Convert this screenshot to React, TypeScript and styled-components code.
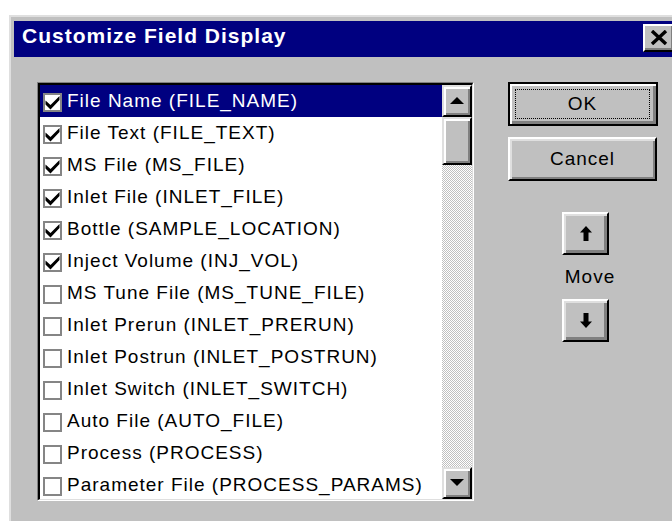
import React from 'react';
import styled, { createGlobalStyle } from 'styled-components';

const GlobalStyle = createGlobalStyle`
  html, body {
    margin: 0;
    padding: 0;
    background: #ffffff;
  }
  body {
    width: 672px;
    height: 521px;
    overflow: hidden;
    font-family: "Liberation Sans", Arial, sans-serif;
  }
`;

const Page = styled.div`
  width: 672px;
  height: 521px;
  overflow: hidden;
  box-sizing: border-box;
  padding: 15px 0 0 9px;
`;

const Window = styled.div`
  width: 680px;
  height: 520px;
  box-sizing: border-box;
  background: #c0c0c0;
  border-top: 2px solid #dfdfdf;
  border-left: 2px solid #dfdfdf;
  padding: 4px 0 0 3px;
  display: flex;
  flex-direction: column;
`;

const TitleBar = styled.div`
  width: 664px;
  height: 36px;
  flex: none;
  box-sizing: border-box;
  background: #000080;
  display: flex;
  align-items: flex-start;
  justify-content: space-between;
  padding: 0 3px 0 8px;
`;

const TitleText = styled.span`
  color: #ffffff;
  font-weight: bold;
  font-size: 21px;
  letter-spacing: 1px;
  line-height: 36px;
  margin-top: -3px;
`;

const CloseButton = styled.div`
  width: 32px;
  height: 28px;
  margin-top: 3px;
  box-sizing: border-box;
  background: #c0c0c0;
  border: 2px solid;
  border-color: #ffffff #000000 #000000 #ffffff;
  box-shadow: inset -2px -2px #808080;
  display: flex;
  align-items: center;
  justify-content: center;
  padding: 0 0 2px 0;
`;

const Body = styled.div`
  display: flex;
  align-items: flex-start;
  padding: 25px 0 0 23px;
`;

const ListFrame = styled.div`
  width: 437px;
  height: 419px;
  flex: none;
  box-sizing: border-box;
  border: 1px solid;
  border-color: #808080 #ffffff #ffffff #808080;
  display: flex;
`;

const ListInner = styled.div`
  flex: 1;
  box-sizing: border-box;
  border-style: solid;
  border-width: 2px 1px 1px 2px;
  border-color: #000000 #dfdfdf #dfdfdf #000000;
  background: #ffffff;
  display: flex;
  overflow: hidden;
`;

const Rows = styled.div`
  flex: 1;
  display: flex;
  flex-direction: column;
  overflow: hidden;
`;

const Row = styled.div<{ $selected?: boolean }>`
  height: 32px;
  flex: none;
  display: flex;
  align-items: center;
  padding-left: 3px;
  gap: 5px;
  background: ${(p) => (p.$selected ? '#000080' : '#ffffff')};
  color: ${(p) => (p.$selected ? '#ffffff' : '#000000')};
  font-size: 19px;
  letter-spacing: 1px;
  white-space: nowrap;
`;

const Box = styled.span`
  width: 19px;
  height: 19px;
  flex: none;
  box-sizing: border-box;
  border: 2px solid #858585;
  background: #ffffff;
  display: flex;
  align-items: center;
  justify-content: center;
  margin-top: 2px;
`;

const Scrollbar = styled.div`
  width: 30px;
  flex: none;
  display: flex;
  flex-direction: column;
`;

const ScrollButton = styled.div<{ $size: number }>`
  height: ${(p) => p.$size}px;
  flex: none;
  box-sizing: border-box;
  background: #c0c0c0;
  border: 2px solid;
  border-color: #dfdfdf #000000 #000000 #dfdfdf;
  box-shadow: inset 2px 2px #ffffff, inset -2px -2px #808080;
  display: flex;
  align-items: center;
  justify-content: center;
`;

const Track = styled.div`
  flex: 1;
  background-color: #ffffff;
  background-image: conic-gradient(#c0c0c0 25%, #ffffff 0 50%, #c0c0c0 0 75%, #ffffff 0);
  background-size: 2px 2px;
`;

const Side = styled.div`
  width: 150px;
  margin-left: 34px;
  display: flex;
  flex-direction: column;
  align-items: flex-start;
`;

const PushButton = styled.div<{ $default?: boolean }>`
  width: ${(p) => (p.$default ? 150 : 149)}px;
  height: 44px;
  box-sizing: border-box;
  background: #c0c0c0;
  border: 2px solid;
  border-color: ${(p) =>
    p.$default ? '#000000' : '#ffffff #000000 #000000 #ffffff'};
  box-shadow: ${(p) =>
    p.$default
      ? 'inset 2px 2px #ffffff, inset -3px -3px #808080'
      : 'inset 2px 2px #dfdfdf, inset -2px -2px #808080'};
  padding: ${(p) => (p.$default ? '5px 6px 5px 5px' : '0')};
  display: flex;
  align-items: stretch;
  justify-content: center;
  font-size: 19px;
  letter-spacing: 1px;
  color: #000000;
  & + & {
    margin-top: 11px;
  }
`;

const Caption = styled.span`
  flex: 1;
  display: flex;
  align-items: center;
  justify-content: center;
  padding-bottom: 1px;
`;

const FocusRing = styled(Caption)`
  border: 1px dotted #000000;
`;

const MoveButton = styled.div<{ $top: number }>`
  width: 47px;
  height: 43px;
  margin-left: 54px;
  margin-top: ${(p) => p.$top}px;
  box-sizing: border-box;
  background: #c0c0c0;
  border: 2px solid;
  border-color: #ffffff #000000 #000000 #ffffff;
  box-shadow: inset 2px 2px #dfdfdf, inset -3px -3px #808080;
  display: flex;
  align-items: center;
  justify-content: center;
`;

const MoveLabel = styled.div`
  width: 160px;
  height: 44px;
  line-height: 44px;
  text-align: center;
  margin-left: 2px;
  font-size: 19px;
  letter-spacing: 1px;
  color: #000000;
`;

const Check = () => (
  <svg width="15" height="15" viewBox="0 0 15 15">
    <polygon points="0.5,5.5 0.5,9.5 5.5,14.5 14.5,5 14.5,1 5.5,10" fill="#000" />
  </svg>
);

const Triangle = ({ down }: { down?: boolean }) => (
  <svg width="14" height="8" viewBox="0 0 14 8">
    <polygon points={down ? '0,0 14,0 7,7' : '7,0 14,7 0,7'} fill="#000" />
  </svg>
);

const Arrow = ({ down }: { down?: boolean }) => (
  <svg width="12" height="15" viewBox="0 0 12 15" style={{ transform: down ? 'rotate(180deg)' : undefined }}>
    <path d="M6 0 L12 6.5 L8.5 6.5 L8.5 15 L3.5 15 L3.5 6.5 L0 6.5 Z" fill="#000" />
  </svg>
);

const CloseGlyph = () => (
  <svg width="18" height="15" viewBox="0 0 18 15">
    <path d="M2 1 L16 14 M16 1 L2 14" stroke="#000" strokeWidth="3.4" />
  </svg>
);

const fields = [
  { label: 'File Name (FILE_NAME)', on: true },
  { label: 'File Text (FILE_TEXT)', on: true },
  { label: 'MS File (MS_FILE)', on: true },
  { label: 'Inlet File (INLET_FILE)', on: true },
  { label: 'Bottle (SAMPLE_LOCATION)', on: true },
  { label: 'Inject Volume (INJ_VOL)', on: true },
  { label: 'MS Tune File (MS_TUNE_FILE)', on: false },
  { label: 'Inlet Prerun (INLET_PRERUN)', on: false },
  { label: 'Inlet Postrun (INLET_POSTRUN)', on: false },
  { label: 'Inlet Switch (INLET_SWITCH)', on: false },
  { label: 'Auto File (AUTO_FILE)', on: false },
  { label: 'Process (PROCESS)', on: false },
  { label: 'Parameter File (PROCESS_PARAMS)', on: false },
];

export default function App() {
  return (
    <>
      <GlobalStyle />
      <Page>
        <Window>
          <TitleBar>
            <TitleText>Customize Field Display</TitleText>
            <CloseButton>
              <CloseGlyph />
            </CloseButton>
          </TitleBar>
          <Body>
            <ListFrame>
              <ListInner>
                <Rows>
                  {fields.map((f, i) => (
                    <Row key={f.label} $selected={i === 0}>
                      <Box>{f.on && <Check />}</Box>
                      <span>{f.label}</span>
                    </Row>
                  ))}
                </Rows>
                <Scrollbar>
                  <ScrollButton $size={32}>
                    <Triangle />
                  </ScrollButton>
                  <ScrollButton $size={48} />
                  <Track />
                  <ScrollButton $size={32}>
                    <Triangle down />
                  </ScrollButton>
                </Scrollbar>
              </ListInner>
            </ListFrame>
            <Side>
              <PushButton $default>
                <FocusRing>OK</FocusRing>
              </PushButton>
              <PushButton>
                <Caption>Cancel</Caption>
              </PushButton>
              <MoveButton $top={31}>
                <Arrow />
              </MoveButton>
              <MoveLabel>Move</MoveLabel>
              <MoveButton $top={0}>
                <Arrow down />
              </MoveButton>
            </Side>
          </Body>
        </Window>
      </Page>
    </>
  );
}
